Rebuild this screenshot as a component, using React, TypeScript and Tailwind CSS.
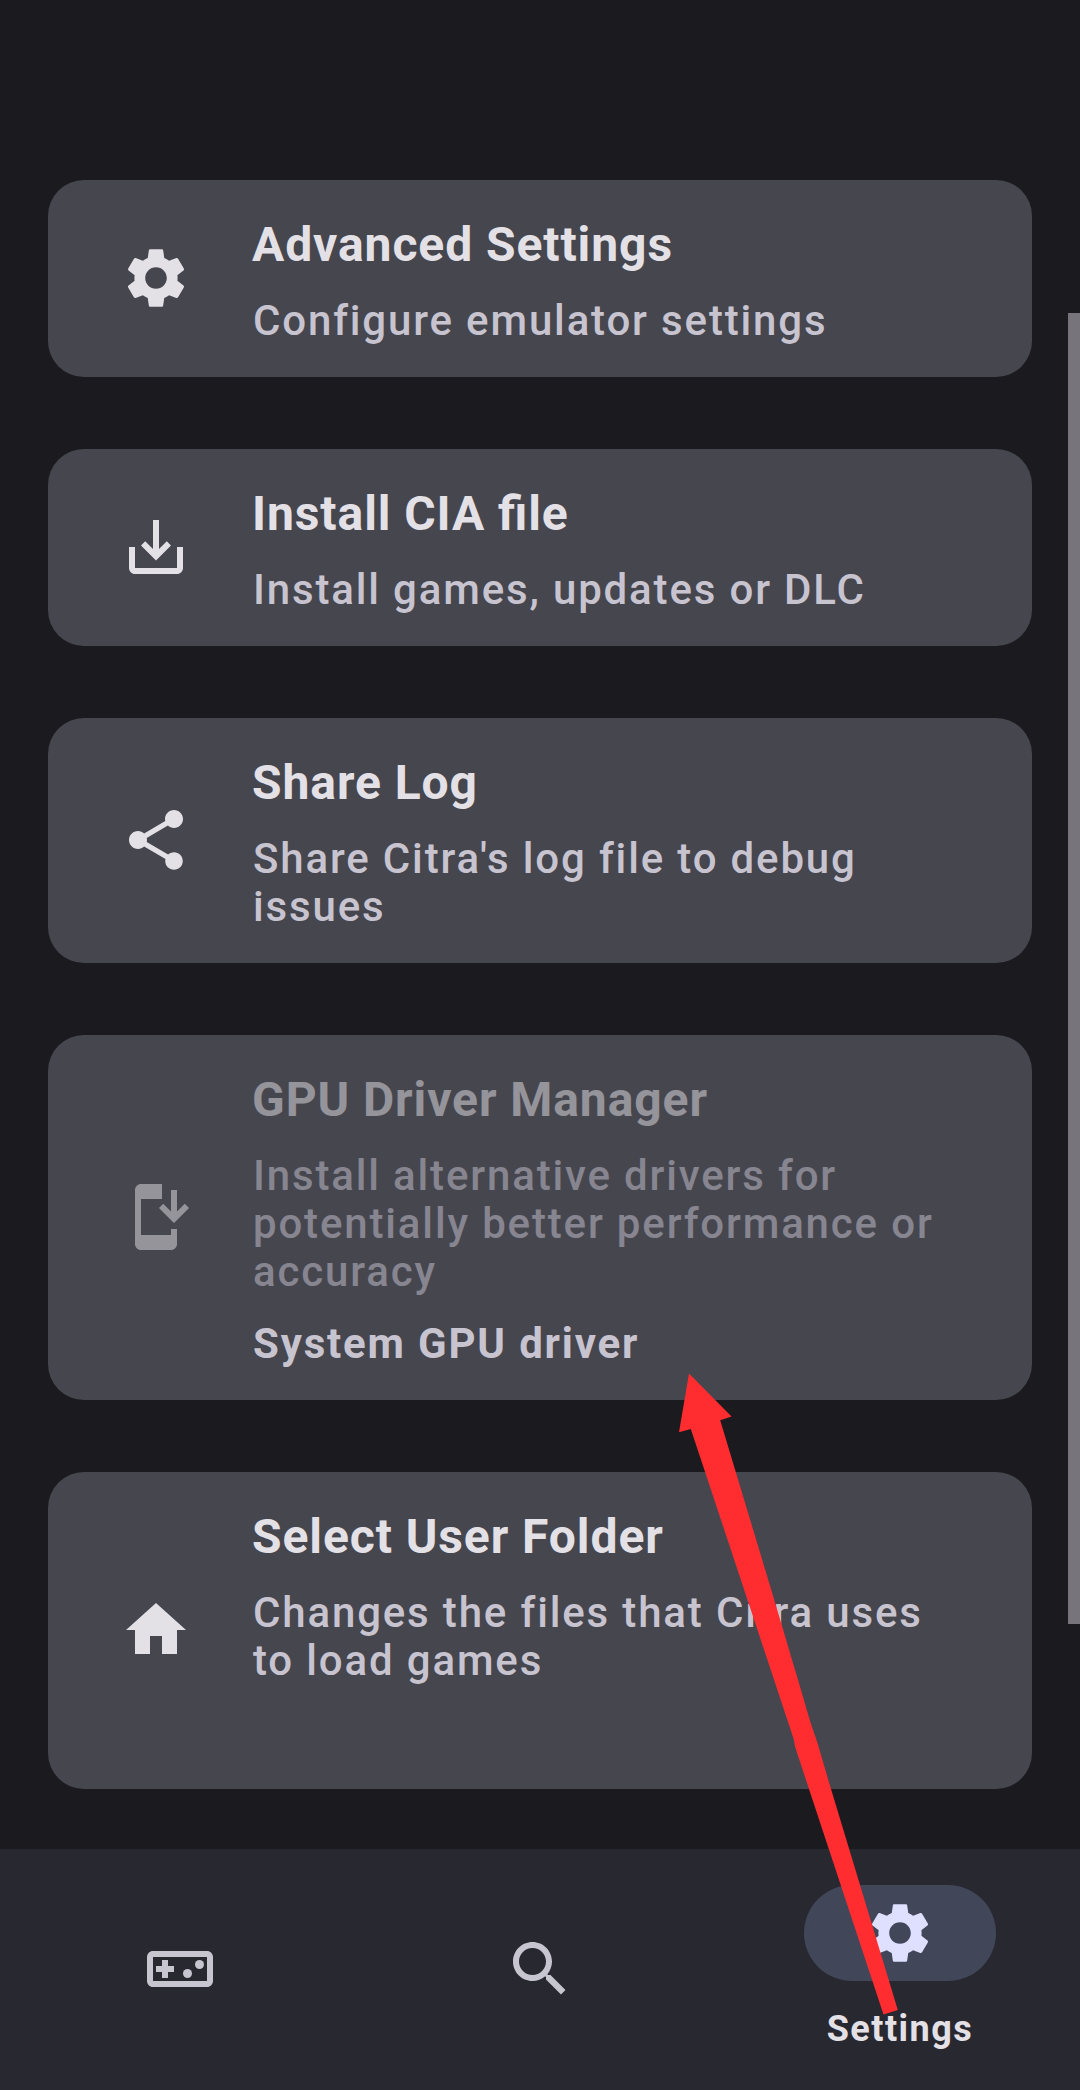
import type { ReactNode } from "react";

function Icon({ children, className = "" }: { children: ReactNode; className?: string }) {
  return (
    <svg viewBox="0 0 24 24" fill="currentColor" className={`size-[72px] shrink-0 ${className}`}>
      {children}
    </svg>
  );
}

const gear = (
  <path d="M19.14 12.94c.04-.3.06-.61.06-.94 0-.32-.02-.64-.07-.94l2.03-1.58c.18-.14.23-.41.12-.61l-1.92-3.32c-.12-.22-.37-.29-.59-.22l-2.39.96c-.5-.38-1.03-.7-1.62-.94l-.36-2.54c-.04-.24-.24-.41-.48-.41h-3.84c-.24 0-.43.17-.47.41l-.36 2.54c-.59.24-1.13.57-1.62.94l-2.39-.96c-.22-.08-.47 0-.59.22L2.74 8.87c-.12.21-.08.47.12.61l2.03 1.58c-.05.3-.09.63-.09.94s.02.64.07.94l-2.03 1.58c-.18.14-.23.41-.12.61l1.92 3.32c.12.22.37.29.59.22l2.39-.96c.5.38 1.03.7 1.62.94l.36 2.54c.05.24.24.41.48.41h3.84c.24 0 .44-.17.47-.41l.36-2.54c.59-.24 1.13-.56 1.62-.94l2.39.96c.22.08.47 0 .59-.22l1.92-3.32c.12-.22.07-.47-.12-.61l-2.01-1.58zM12 15.6c-1.98 0-3.6-1.62-3.6-3.6s1.62-3.6 3.6-3.6 3.6 1.62 3.6 3.6-1.62 3.6-3.6 3.6z" />
);

const options: {
  title: string;
  text: string;
  icon: ReactNode;
  disabled?: boolean;
  detail?: string;
}[] = [
  {
    title: "Advanced Settings",
    text: "Configure emulator settings",
    icon: gear,
  },
  {
    title: "Install CIA file",
    text: "Install games, updates or DLC",
    icon: (
      <path d="M19 12v7H5v-7H3v7c0 1.1.9 2 2 2h14c1.1 0 2-.9 2-2v-7h-2zm-6 .67l2.59-2.58L17 11.5l-5 5-5-5 1.41-1.41L11 12.67V3h2v9.67z" />
    ),
  },
  {
    title: "Share Log",
    text: "Share Citra's log file to debug issues",
    icon: (
      <path d="M18 16.08c-.76 0-1.44.3-1.96.77L8.91 12.7c.05-.23.09-.46.09-.7s-.04-.47-.09-.7l7.05-4.11c.54.5 1.25.81 2.04.81 1.66 0 3-1.34 3-3s-1.34-3-3-3-3 1.34-3 3c0 .24.04.47.09.7L8.04 9.81C7.5 9.31 6.79 9 6 9c-1.66 0-3 1.34-3 3s1.34 3 3 3c.79 0 1.5-.31 2.04-.81l7.12 4.16c-.05.21-.08.43-.08.65 0 1.61 1.31 2.92 2.92 2.92s2.92-1.31 2.92-2.92-1.31-2.92-2.92-2.92z" />
    ),
  },
  {
    title: "GPU Driver Manager",
    text: "Install alternative drivers for potentially better performance or accuracy",
    disabled: true,
    detail: "System GPU driver",
    icon: (
      <>
        <path d="M17 18H7V6h7V1H7c-1.1 0-2 .9-2 2v18c0 1.1.9 2 2 2h10c1.1 0 2-.9 2-2v-5h-2v2z" />
        <path d="M18 14l5-5-1.41-1.41L19 10.17V3h-2v7.17l-2.59-2.58L13 9z" />
      </>
    ),
  },
  {
    title: "Select User Folder",
    text: "Changes the files that Citra uses to load games",
    detail: "",
    icon: <path d="M10 20v-6h4v6h5v-8h3L12 3 2 12h3v8z" />,
  },
];

export default function App() {
  return (
    <div className="relative flex h-[2090px] w-[1080px] flex-col overflow-hidden bg-[#1b1b1f] font-[Roboto,sans-serif]">
      <main className="flex grow flex-col gap-[72px] px-12 pt-[180px]">
        {options.map((o) => (
          <section
            key={o.title}
            className="flex items-center gap-[60px] rounded-[36px] bg-[#46464f] pr-[66px] pb-px pl-[72px]"
          >
            <Icon className={o.disabled ? "text-[#e4e1e6] opacity-50" : "text-[#e4e1e6]"}>{o.icon}</Icon>
            <div className="flex min-w-0 grow flex-col gap-6 pt-[37px] pb-[31px]">
              <h2
                className={`text-[48px] leading-[56px] font-bold tracking-[0.92px] text-[#e4e1e6] [font-feature-settings:'liga'_1] ${o.disabled ? "opacity-50" : ""}`}
              >
                {o.title}
              </h2>
              <p
                className={`pl-px text-[42px] leading-[48px] font-medium tracking-[1.84px] text-[#c8c4cf] ${o.disabled ? "opacity-50" : ""}`}
              >
                {o.text}
              </p>
              {o.detail !== undefined && (
                <p className="h-12 pl-px text-[42px] leading-[48px] font-bold tracking-[1.82px] text-[#c8c4cf]">
                  {o.detail}
                </p>
              )}
            </div>
          </section>
        ))}
      </main>

      <nav className="grid h-[241px] shrink-0 grid-cols-3 bg-[#282831] text-[#c7c5d0]">
        <div className="flex justify-center pt-[84px]">
          <Icon>
            <path d="M21 6H3c-1.1 0-2 .9-2 2v8c0 1.1.9 2 2 2h18c1.1 0 2-.9 2-2V8c0-1.1-.9-2-2-2zm0 10H3V8h18v8zM6 15h2v-2h2v-2H8V9H6v2H4v2h2z" />
            <circle cx="14.5" cy="13.5" r="1.5" />
            <circle cx="18.5" cy="10.5" r="1.5" />
          </Icon>
        </div>
        <div className="flex justify-center pt-[84px]">
          <Icon>
            <path d="M15.5 14h-.79l-.28-.27C15.41 12.59 16 11.11 16 9.5 16 5.91 13.09 3 9.5 3S3 5.91 3 9.5 5.91 16 9.5 16c1.61 0 3.09-.59 4.23-1.57l.27.28v.79l5 4.99L20.49 19l-4.99-5zm-6 0C7.01 14 5 11.99 5 9.5S7.01 5 9.5 5 14 7.01 14 9.5 11.99 14 9.5 14z" />
          </Icon>
        </div>
        <div className="flex flex-col items-center pt-9">
          <div className="flex h-24 w-48 items-center justify-center rounded-full bg-[#424659]">
            <Icon className="text-[#dfe0ff]">{gear}</Icon>
          </div>
          <span className="mt-[27px] text-[36px] leading-[42px] font-bold tracking-[1.5px] text-[#e4e1e6]">
            Settings
          </span>
        </div>
      </nav>

      <div className="absolute top-[313px] right-0 h-[1311px] w-3 bg-[#77747c]" />

      <svg viewBox="0 0 1080 2090" className="pointer-events-none absolute inset-0 h-full w-full">
        <path
          fill="#ff2d30"
          d="M689 1373.500L731.500 1416.500L720.200 1420.300L772.500 1594L801 1690L810 1721L817.500 1743L828.300 1780L897.800 2010L883.500 2014.500L806 1780L795 1746.500L794 1740L690.800 1429L679 1432.300Z"
        />
      </svg>
    </div>
  );
}
